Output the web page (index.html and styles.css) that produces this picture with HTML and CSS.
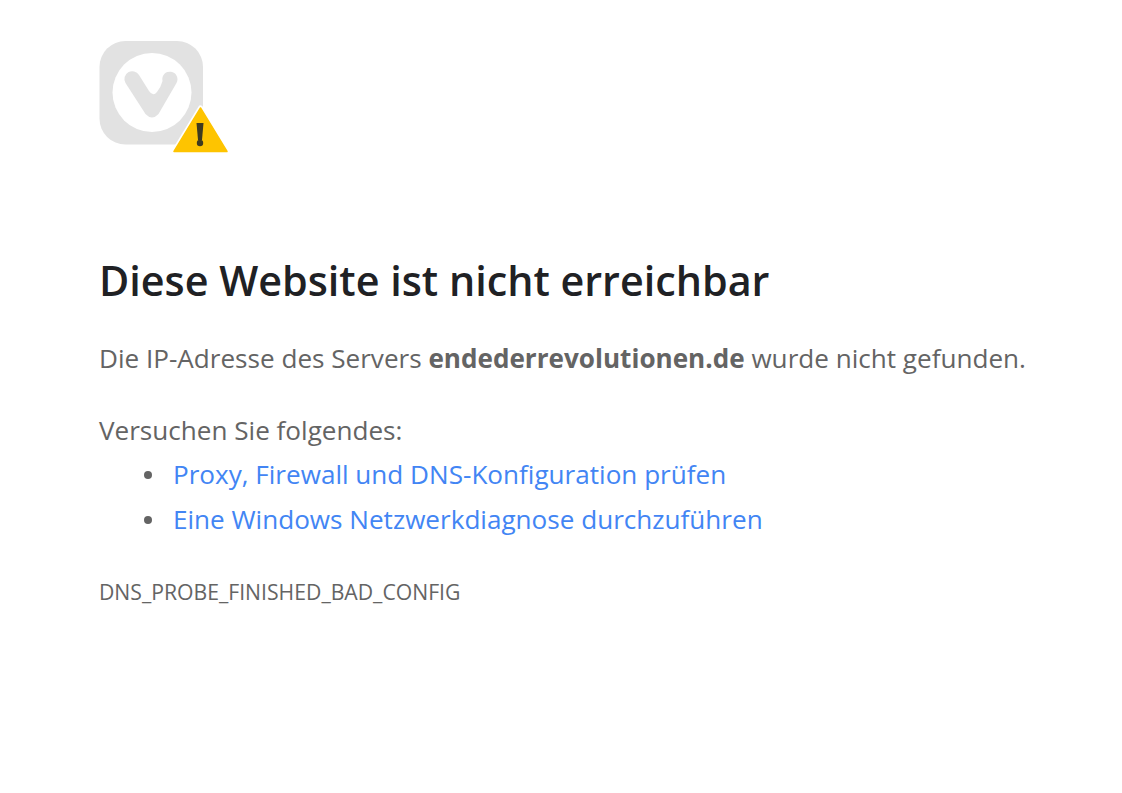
FILE: index.html
```html
<!DOCTYPE html>
<html lang="de">
<head>
    <meta charset="UTF-8">
    <meta name="viewport" content="width=device-width, initial-scale=1.0">
    <title>Diese Website ist nicht erreichbar</title>
    <link rel="stylesheet" href="styles.css">
</head>
<body>

<div class="container">
    <div class="icon">
        <svg width="132" height="114" viewBox="0 0 132 114">
            <rect x="0.5" y="0" width="103.5" height="103.5" rx="26" fill="#e2e2e2"/>
            <circle cx="53" cy="51.5" r="39.5" fill="#fff"/>
            <path d="M26.5 42 A7.8 7.8 0 0 1 40 34 L50 50 Q54 56 58 51 Q62 46 63.5 40 A7.6 7.6 0 1 1 77.5 42 L59.5 73 Q53 80 46.5 73 Z" fill="#e2e2e2"/>
            <path d="M101.5 67 L128 110.5 L75 110.5 Z" fill="#fec400" stroke="#fff" stroke-width="5" stroke-linejoin="round"/>
            <path d="M101.5 67 L128 110.5 L75 110.5 Z" fill="#fec400" stroke="#fec400" stroke-width="1.5" stroke-linejoin="round"/>
            <path d="M97.5 82 H104.5 L103 99 H99 Z" fill="#3d3a20"/>
            <circle cx="101" cy="102" r="3.2" fill="#3d3a20"/>
        </svg>
    </div>

    <h1>Diese Website ist nicht erreichbar</h1>
    <p class="summary">Die IP-Adresse des Servers <b>endederrevolutionen.de</b> wurde nicht gefunden.</p>

    <p class="try">Versuchen Sie folgendes:</p>
    <ul>
        <li><a href="#">Proxy, Firewall und DNS-Konfiguration prüfen</a></li>
        <li><a href="#">Eine Windows Netzwerkdiagnose durchzuführen</a></li>
    </ul>

    <div class="code">DNS_PROBE_FINISHED_BAD_CONFIG</div>
</div>

</body>
</html>
```

FILE: styles.css
```css
body {
    font-family: "Open Sans", "Noto Sans", sans-serif;
    font-size: 26.1px;
    color: #646464;
    background: #fff;
    margin: 0;
}
.container {
    padding: 41px 0 0 99px;
}
.icon {
    height: 114px;
    margin-bottom: 98px;
}
.icon svg {
    display: block;
}
h1 {
    font-size: 41.3px;
    font-weight: 600;
    line-height: 54px;
    color: #202124;
    margin: 0 0 29px;
}
p {
    margin: 0;
    line-height: 44px;
}
.summary {
    margin-bottom: 28px;
}
ul {
    list-style: none;
    margin: 0 0 36px;
    padding-left: 45px;
}
li {
    display: flex;
    align-items: center;
    gap: 21px;
    line-height: 45px;
}
li::before {
    content: "";
    width: 8px;
    height: 8px;
    border-radius: 50%;
    background: #646464;
}
a {
    color: #4285f4;
    text-decoration: none;
}
.code {
    font-size: 21.2px;
    line-height: 28px;
    color: #646464;
}
```
